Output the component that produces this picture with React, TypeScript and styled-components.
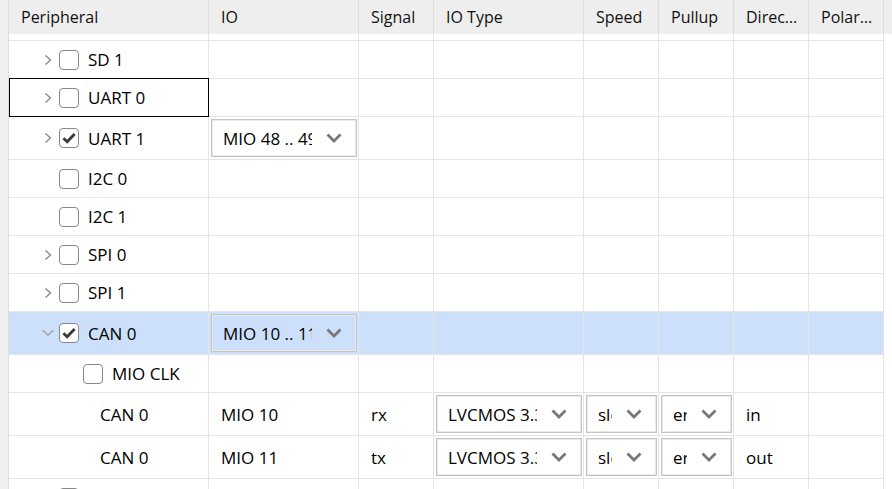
import React from "react";
import styled, { createGlobalStyle, css } from "styled-components";

const GlobalStyle = createGlobalStyle`
  html, body { margin: 0; padding: 0; background: #ffffff; }
  body {
    font-family: "Open Sans", "Noto Sans", "DejaVu Sans", sans-serif;
    font-size: 17px;
    color: #000000;
  }
`;

const COLS = "200px 150px 75px 150px 75px 75px 75px 75px 1fr";
const LINE = "#e5e5e5";

const Page = styled.div`
  display: flex;
  width: 892px;
  height: 489px;
  overflow: hidden;
`;

const Strip = styled.div`
  flex: none;
  width: 8px;
  background: #f0f0f0;
  border-right: 1px solid #dedede;
`;

const Main = styled.div`
  flex: 1;
  min-width: 0;
  display: flex;
  flex-direction: column;
`;

const HeaderRow = styled.div`
  display: grid;
  grid-template-columns: ${COLS};
  height: 34px;
  flex: none;
  background: #eeeeee;
`;

const HeaderCell = styled.div`
  box-sizing: border-box;
  border-right: 1px solid #dcdcdc;
  padding: 0 8px 0 12px;
  line-height: 34px;
  font-size: 16px;
  white-space: nowrap;
  overflow: hidden;
  text-overflow: ellipsis;
  color: #111;
`;

const HeaderFiller = styled.div``;

const Body = styled.div`
  flex: 1;
  overflow: hidden;
`;

const Row = styled.div<{ $h: number; $selected?: boolean }>`
  display: grid;
  grid-template-columns: ${COLS};
  height: ${(p) => p.$h}px;
  background: ${(p) => (p.$selected ? "#cce0fb" : "#ffffff")};
`;

const Cell = styled.div<{ $focused?: boolean }>`
  position: relative;
  box-sizing: border-box;
  border-right: 1px solid ${LINE};
  border-bottom: 1px solid ${LINE};
  display: flex;
  align-items: center;
  min-width: 0;
  white-space: nowrap;
  overflow: visible;
  ${(p) =>
    p.$focused &&
    css`
      &::after {
        content: "";
        position: absolute;
        left: 0;
        top: -1px;
        right: -1px;
        bottom: -1px;
        border: 1px solid #000;
        pointer-events: none;
      }
    `}
`;

const TextCell = styled(Cell)`
  padding-left: 12px;
`;

const Filler = styled.div`
  background: #ffffff;
`;

const TreeCell = styled(Cell)<{ $level: number }>`
  padding-left: ${(p) => 31 + (p.$level - 1) * 24}px;
`;

const LeafCell = styled(Cell)`
  padding-left: 91px;
`;

const Expander = styled.span`
  flex: none;
  width: 16px;
  height: 16px;
  margin-right: 3px;
  display: flex;
  align-items: center;
  justify-content: center;
`;

const Box = styled.span`
  flex: none;
  box-sizing: border-box;
  width: 20px;
  height: 20px;
  border: 1.6px solid #888888;
  border-radius: 4px;
  background: #ffffff;
  margin-right: 9px;
  display: flex;
  align-items: center;
  justify-content: center;
`;

const Label = styled.span`
  color: #000;
`;

const Select = styled.div<{ $selected?: boolean }>`
  box-sizing: border-box;
  flex: 1;
  min-width: 0;
  height: 38px;
  margin: 0 1px 0 2px;
  border: 1px solid #c4c4c4;
  box-shadow: inset 0 0 0 1px #e9e9e9;
  background: ${(p) => (p.$selected ? "transparent" : "#ffffff")};
  display: flex;
  align-items: center;
  padding: 0 14px 0 11px;
  gap: 14px;
`;

const SelectText = styled.span`
  flex: 1;
  min-width: 0;
  overflow: hidden;
  white-space: nowrap;
  color: #000;
`;

const ChevronRight = () => (
  <svg width="10" height="12" viewBox="0 0 10 12">
    <path d="M2.5 1.5 L7.5 6 L2.5 10.5" fill="none" stroke="#8a8a8a" strokeWidth="1.4" />
  </svg>
);

const ChevronDownThin = () => (
  <svg width="12" height="8" viewBox="0 0 12 8">
    <path d="M0.8 1.2 L6 6.4 L11.2 1.2" fill="none" stroke="#9a9a9a" strokeWidth="1.3" />
  </svg>
);

const SelectChevron = () => (
  <svg width="16" height="10" viewBox="0 0 16 10" style={{ flex: "none" }}>
    <path d="M1.5 1.5 L8 8 L14.5 1.5" fill="none" stroke="#777777" strokeWidth="2.8" />
  </svg>
);

const Check = () => (
  <svg width="16" height="16" viewBox="0 0 16 16">
    <path d="M2.4 8.2 L6.2 11.8 L13.6 4" fill="none" stroke="#3a3a3a" strokeWidth="2.8" />
  </svg>
);

type Tree = {
  label: string;
  level: number;
  expander?: "closed" | "open";
  checked?: boolean;
  io?: string;
  selected?: boolean;
  focused?: boolean;
};

const Dropdown = ({ value, selected }: { value: string; selected?: boolean }) => (
  <Select $selected={selected}>
    <SelectText>{value}</SelectText>
    <SelectChevron />
  </Select>
);

const Empties = ({ n }: { n: number }) => (
  <>
    {Array.from({ length: n }).map((_, i) => (
      <Cell key={i} />
    ))}
  </>
);

const TreeRow = ({ r }: { r: Tree }) => (
  <Row $h={r.io ? 43 : 38} $selected={r.selected}>
    <TreeCell $level={r.level} $focused={r.focused}>
      <Expander>
        {r.expander === "closed" && <ChevronRight />}
        {r.expander === "open" && <ChevronDownThin />}
      </Expander>
      <Box>{r.checked && <Check />}</Box>
      <Label>{r.label}</Label>
    </TreeCell>
    <Cell>{r.io && <Dropdown value={r.io} selected={r.selected} />}</Cell>
    <Empties n={6} />
    <Filler />
  </Row>
);

type Pin = { periph: string; io: string; signal: string; dir: string };

const PinRow = ({ p }: { p: Pin }) => (
  <Row $h={43}>
    <LeafCell>
      <Label>{p.periph}</Label>
    </LeafCell>
    <TextCell>{p.io}</TextCell>
    <TextCell>{p.signal}</TextCell>
    <Cell>
      <Dropdown value="LVCMOS 3.3V" />
    </Cell>
    <Cell>
      <Dropdown value="slow" />
    </Cell>
    <Cell>
      <Dropdown value="enabled" />
    </Cell>
    <TextCell>{p.dir}</TextCell>
    <Cell />
    <Filler />
  </Row>
);

const before: Tree[] = [
  { label: "SD 1", level: 1, expander: "closed" },
  { label: "UART 0", level: 1, expander: "closed", focused: true },
  { label: "UART 1", level: 1, expander: "closed", checked: true, io: "MIO 48 .. 49" },
  { label: "I2C 0", level: 1 },
  { label: "I2C 1", level: 1 },
  { label: "SPI 0", level: 1, expander: "closed" },
  { label: "SPI 1", level: 1, expander: "closed" },
  { label: "CAN 0", level: 1, expander: "open", checked: true, io: "MIO 10 .. 11", selected: true },
  { label: "MIO CLK", level: 2 },
];

const pins: Pin[] = [
  { periph: "CAN 0", io: "MIO 10", signal: "rx", dir: "in" },
  { periph: "CAN 0", io: "MIO 11", signal: "tx", dir: "out" },
];

const headers = ["Peripheral", "IO", "Signal", "IO Type", "Speed", "Pullup", "Direction", "Polarity"];

export default function App() {
  return (
    <>
      <GlobalStyle />
      <Page>
        <Strip />
        <Main>
          <HeaderRow>
            {headers.map((h) => (
              <HeaderCell key={h}>{h}</HeaderCell>
            ))}
            <HeaderFiller />
          </HeaderRow>
          <Body>
            <Row $h={7}>
              <Empties n={8} />
              <Filler />
            </Row>
            {before.map((r, i) => (
              <TreeRow key={i} r={r} />
            ))}
            {pins.map((p, i) => (
              <PinRow key={i} p={p} />
            ))}
            <TreeRow r={{ label: "CAN 1", level: 1, expander: "closed" }} />
          </Body>
        </Main>
      </Page>
    </>
  );
}
